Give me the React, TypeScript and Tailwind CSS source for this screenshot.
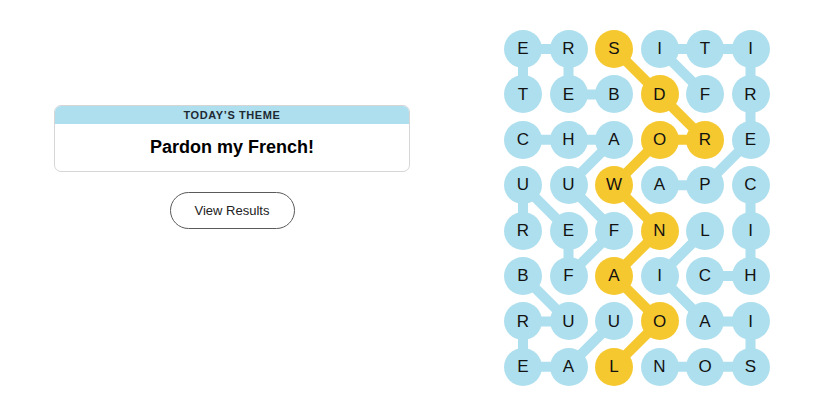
import React from 'react';

const LETTERS = [
  'ERSITI',
  'TEBDFR',
  'CHAORE',
  'UUWAPC',
  'REFNLI',
  'BFAICH',
  'RUUOAI',
  'EALNOS',
];

// words found, as [row, col] paths
const THEME_WORDS: number[][][] = [
  [[1, 2], [1, 1], [0, 1], [0, 0], [1, 0]], // BERET
  [[3, 3], [3, 4], [2, 5], [1, 5], [0, 5], [0, 4], [0, 3], [1, 4]], // APERITIF
  [[2, 0], [2, 1], [2, 2], [3, 1], [4, 2], [5, 1], [4, 1], [3, 0], [4, 0]], // CHAUFFEUR
  [[5, 0], [6, 1], [6, 0], [7, 0], [7, 1], [6, 2]], // BUREAU
  [[4, 4], [5, 3], [6, 4], [6, 5], [7, 5], [7, 4], [7, 3]], // LIAISON
  [[5, 4], [5, 5], [4, 5], [3, 5]], // CHIC
];

const SPANGRAM = [[7, 2], [6, 3], [5, 2], [4, 3], [3, 2], [2, 3], [2, 4], [1, 3], [0, 2]];

const BLUE = '#aedfee';
const YELLOW = '#f6c82f';

const cx = (c: number) => 19 + c * 45.5;
const cy = (r: number) => 19 + r * 45.4;

const isSpangram = (r: number, c: number) => SPANGRAM.some(([a, b]) => a === r && b === c);

const PathLine: React.FC<{ path: number[][]; color: string }> = ({ path, color }) => (
  <polyline
    points={path.map(([r, c]) => `${cx(c)},${cy(r)}`).join(' ')}
    fill="none"
    stroke={color}
    strokeWidth={10}
    strokeLinejoin="round"
    strokeLinecap="round"
  />
);

const Board: React.FC = () => (
  <div className="relative w-[266px] h-[357px]">
    <svg className="absolute inset-0" width={266} height={357}>
      {THEME_WORDS.map((w, i) => (
        <PathLine key={i} path={w} color={BLUE} />
      ))}
      <PathLine path={SPANGRAM} color={YELLOW} />
    </svg>
    <div className="relative grid grid-cols-[repeat(6,38px)] gap-x-[7.5px] gap-y-[7.4px]">
      {LETTERS.map((row, r) =>
        row.split('').map((ch, c) => (
          <div
            key={`${r}-${c}`}
            className={`w-[38px] h-[38px] rounded-full flex items-center justify-center text-[17px] text-[#121212] ${
              isSpangram(r, c) ? 'bg-[#f6c82f]' : 'bg-[#aedfee]'
            }`}
          >
            {ch}
          </div>
        ))
      )}
    </div>
  </div>
);

export default function App() {
  return (
    <div className="w-[825px] h-[413px] bg-white flex font-['Liberation_Sans',Arial,sans-serif]">
      <div className="ml-[54px] mt-[105px] w-[356px] flex flex-col items-center">
        <div className="w-full rounded-[7px] border border-[#d6d6d6] overflow-hidden">
          <div className="h-[18px] bg-[#aedfee] flex items-center justify-center text-[11px] font-bold tracking-[0.6px] text-[#1e2a33]">
            TODAY&#8217;S THEME
          </div>
          <div className="h-[47px] flex items-center justify-center text-[18px] font-bold text-black">
            Pardon my French!
          </div>
        </div>
        <button className="mt-[20px] w-[125px] h-[37px] rounded-full border border-[#5a5a5a] bg-white text-[13px] text-[#222]">
          View Results
        </button>
      </div>
      <div className="ml-[94px] mt-[30px]">
        <Board />
      </div>
    </div>
  );
}
